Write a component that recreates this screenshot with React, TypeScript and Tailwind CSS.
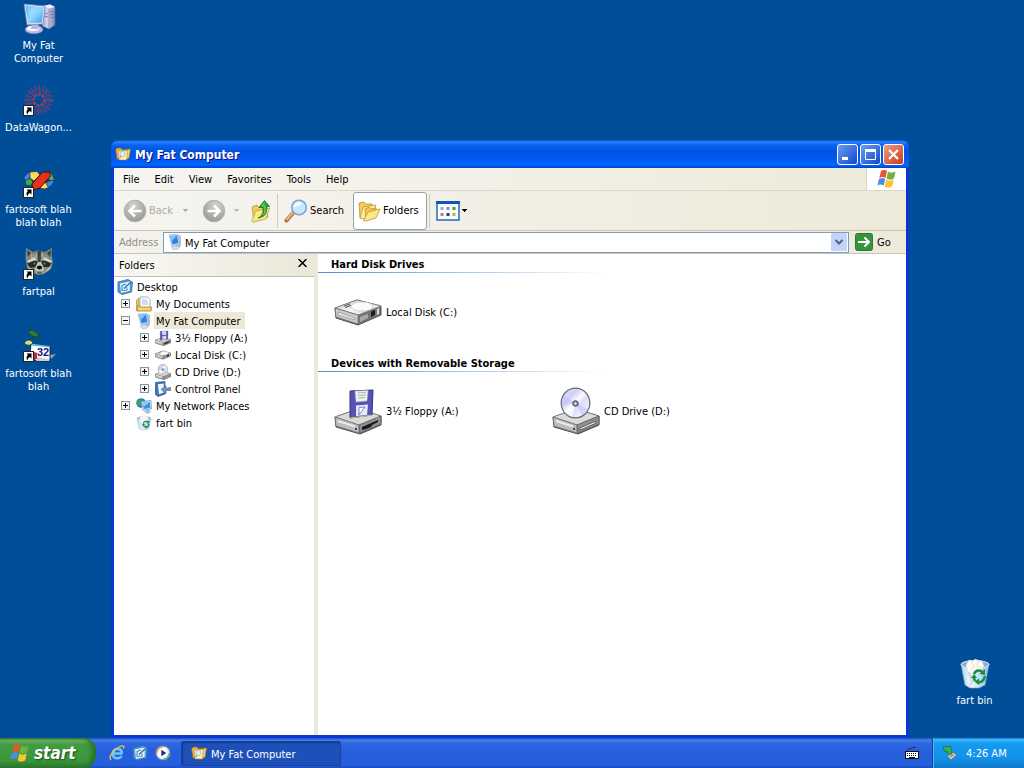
import type { ReactNode } from "react";

type IconProps = { className?: string };

function ShortcutArrow() {
  return (
    <g>
      <rect x=".5" y="20.5" width="10" height="10" fill="#fff" stroke="#222" />
      <path d="M3.500 22.500H8.500V27.500L7 26C5.500 26.500 4.800 27.500 4.500 29.500C3 27.500 3.200 25.500 5 24Z" fill="#000" />
    </g>
  );
}

function ComputerIcon({ className }: IconProps) {
  return (
    <svg viewBox="0 0 32 32" className={className} aria-hidden="true">
      <defs>
        <linearGradient id="pc-screen" x1="0" y1="0" x2="1" y2="1">
          <stop offset="0" stopColor="#3fa8f0" />
          <stop offset=".5" stopColor="#8fdafc" />
          <stop offset="1" stopColor="#3f95ea" />
        </linearGradient>
        <linearGradient id="pc-tower" x1="0" y1="0" x2="1" y2="0">
          <stop offset="0" stopColor="#9ea2cf" />
          <stop offset=".4" stopColor="#d4d2ec" />
          <stop offset="1" stopColor="#8387bb" />
        </linearGradient>
      </defs>
      <path d="M20 3L27 1.500L32 4V22L26 26L19 23Z" fill="url(#pc-tower)" stroke="#5d639b" strokeWidth=".6" />
      <path d="M20 3L27 1.500L32 4L26 5.500Z" fill="#f2f1fb" />
      <path d="M26 5.500V26" stroke="#777bb0" strokeWidth=".6" />
      <path d="M27 9L31.500 8M27 12L31.500 11M27 15L31.500 14M21 10L25 11M21 13L25 14" stroke="#6469a5" strokeWidth=".8" />
      <circle cx="29" cy="18.500" r="1" fill="#5fd05f" />
      <ellipse cx="11" cy="26.500" rx="9" ry="4.300" fill="#b9bce2" stroke="#7479ae" strokeWidth=".6" />
      <ellipse cx="10" cy="25.500" rx="6.500" ry="2.800" fill="#f4f4fd" />
      <path d="M9 20H15L16 26H8Z" fill="#b6b9dd" />
      <path d="M1 1L22 3L20 21L4 22Z" fill="#dfe1f3" stroke="#6c7fb5" strokeWidth=".7" />
      <path d="M2.500 2.500L20.500 4.200L18.800 19.500L5.200 20.300Z" fill="url(#pc-screen)" />
      <path d="M3 2.500L15 4L7 14Z" fill="#fff" opacity=".25" />
    </svg>
  );
}

function WagonIcon({ className }: IconProps) {
  return (
    <svg viewBox="0 0 32 32" className={className} aria-hidden="true">
      <g fill="none">
        <circle cx="16" cy="15" r="13" stroke="#4a4684" strokeWidth="3" strokeDasharray="2 2" />
        <circle cx="16" cy="15" r="10.500" stroke="#7a3f6c" strokeWidth="2" strokeDasharray="2 1.500" />
        <circle cx="16" cy="15" r="8" stroke="#5b4580" strokeWidth="2" strokeDasharray="1.500 1.500" />
        <circle cx="16" cy="15" r="5.500" stroke="#983c59" strokeWidth="2.500" strokeDasharray="3 1" />
        <path d="M16 1V9M16 21V29M2 15H10M22 15H30M6 5L12 11M20 19L26 25M6 25L12 19M20 11L26 5" stroke="#8b3d60" strokeDasharray="1.500 1" />
      </g>
      <ShortcutArrow />
    </svg>
  );
}

function PrismIcon({ className }: IconProps) {
  return (
    <svg viewBox="0 0 32 32" className={className} aria-hidden="true">
      <g stroke="#1b2a30" strokeWidth=".6" strokeLinejoin="round">
        <path d="M1 10L6 5L8 6L7 11L2 14Z" fill="#3d86e8" />
        <path d="M2 14L7 11L10 15L8 19L3 18Z" fill="#3da855" />
        <path d="M7 5L14 4.500L17 8L11 14L7 11Z" fill="#ffd95c" />
        <path d="M26.500 5L29.500 8L31.500 13L27.500 13.500L24 10Z" fill="#4fb85c" />
        <path d="M27.500 13.500H31.500L29 18L25.500 20.500L22 16Z" fill="#3d86e8" />
        <path d="M22 15L25.500 20.500L21.500 22L16 21Z" fill="#ffd95c" />
      </g>
      <path d="M9 17L19.500 5L26.500 5L27.500 9L17 21L10 23Z" fill="#ea3018" stroke="#201410" strokeWidth=".9" strokeLinejoin="round" />
      <ShortcutArrow />
    </svg>
  );
}

function RaccoonIcon({ className }: IconProps) {
  return (
    <svg viewBox="0 0 32 32" className={className} aria-hidden="true">
      <path d="M3 -1L10 3L15 1.500L22 3L29 -1L28.500 6L30 13L28 20L21 25L15 26L8 23L4 18L2.500 10Z" fill="#83897f" />
      <path d="M4 1L8 4L5 8ZM28 1L24 4L27 8Z" fill="#38403c" />
      <path d="M8 5L14 4L14 9L8 10ZM18 4L23 5L25 10L19 9Z" fill="#a9ad9f" />
      <path d="M14.500 2H18L17.500 13H15Z" fill="#3b403d" />
      <path d="M10 2V8M12 3V8M21 3V8M23 4V9" stroke="#666d65" strokeWidth=".8" />
      <path d="M4 14L10 10.500L15 13L13 18L7 19ZM29 13L22 10.500L18 13L20 18L26 18Z" fill="#262b28" />
      <path d="M4 12L11 8.500L14 10.500L5 14ZM29 12L22 8.500L19 10.500L28 14Z" fill="#d6d7c6" />
      <path d="M4 18L8 19L11 24L7 22ZM29 17L25 19L21 24L26 21Z" fill="#b9bcae" />
      <path d="M15 13L18 13L21 19L20 24H13L12 19Z" fill="#c3c5b5" />
      <ellipse cx="16.500" cy="18.500" rx="2.600" ry="2.100" fill="#0c0e0d" />
      <circle cx="11.500" cy="14.500" r=".9" fill="#8a8b69" />
      <circle cx="21.500" cy="14.500" r=".9" fill="#8a8b69" />
      <path d="M13 22.500L20 22.500L18 24.500H15Z" fill="#55605a" />
      <ShortcutArrow />
    </svg>
  );
}

function CardIcon({ className }: IconProps) {
  return (
    <svg viewBox="0 0 32 32" className={className} aria-hidden="true">
      <path d="M26 24L33 23L28 28Z" fill="#8da0ab" />
      <path d="M5 0C8-2 14-1 16 6C12 7 7 5 5 0Z" fill="#2c7a34" stroke="#0c3f18" strokeWidth=".8" />
      <path d="M13 5L15 12" stroke="#224d24" />
      <path d="M8 13L27 15V30H13L7 24Z" fill="#fff" stroke="#101850" strokeWidth=".9" />
      <path d="M8 12.500L27 15V16.500L9 14.500Z" fill="#55b8d6" />
      <path d="M1 12C4 8 8 8 10 12C7 15 4 15 1 12Z" fill="#dcd88c" stroke="#1d421f" strokeWidth=".9" />
      <path d="M11 21L14 22V28L11 29Z" fill="#c22a3d" />
      <path d="M14 26L26 28V30H14Z" fill="#c9d0c5" />
      <text x="14" y="25" fontSize="11" fontWeight="700" fontFamily="Liberation Sans, sans-serif" fill="#1a1680">32</text>
      <ShortcutArrow />
    </svg>
  );
}

function BinIcon({ className }: IconProps) {
  return (
    <svg viewBox="0 0 32 32" className={className} aria-hidden="true">
      <defs>
        <linearGradient id="bin-body" x1="0" y1="0" x2="1" y2="0">
          <stop offset="0" stopColor="#a9d3f0" />
          <stop offset=".35" stopColor="#f3f9fe" />
          <stop offset="1" stopColor="#8dc0ea" />
        </linearGradient>
      </defs>
      <path d="M2 6L30 6L26 27L20 30H11L6 27Z" fill="url(#bin-body)" stroke="#7fa8cc" strokeWidth=".7" />
      <ellipse cx="16" cy="6.500" rx="14" ry="4" fill="#86afe0" stroke="#d8ebfa" />
      <path d="M7 7L10 2L14 3L16 1L20 2.500L23 3L25 8L21 14L16 12L11 18L8 12Z" fill="#fbfaf4" stroke="#c4c7cc" strokeWidth=".5" />
      <path d="M12 4L15 8L13 12M19 3L18 8L23 10" stroke="#e4d9bd" strokeWidth=".8" fill="none" />
      <path d="M10 14L13 24L11 28" stroke="#d0c3dc" strokeWidth="2" fill="none" opacity=".7" />
      <g fill="none" stroke="#16903a" strokeWidth="2.500">
        <path d="M15 16C17 11.500 22 11.500 24 15" />
        <path d="M26 18C25 23 22 25 18 24" />
        <path d="M16 23L14.500 19" />
      </g>
      <path d="M26 11V17L20.500 16ZM20 20.500V27L15.500 23.500ZM12 20L15 16L18 20Z" fill="#16903a" />
    </svg>
  );
}

function MonitorIcon({ className }: IconProps) {
  return (
    <svg viewBox="0 0 16 16" className={className} aria-hidden="true">
      <path d="M10 1L13.500 2V12L11 13L9 12Z" fill="#b4c3d6" stroke="#8ba0ba" strokeWidth=".5" />
      <path d="M4 13.500L8 11.500L13 13L10 15.500H6Z" fill="#d5deea" stroke="#9aacc2" strokeWidth=".5" />
      <path d="M2 1L10.500 0.500L12.500 9.500L5 12Z" fill="#cfe4f6" stroke="#7ea5d0" strokeWidth=".6" />
      <path d="M3.300 2L9.800 1.500L11.400 8.800L5.600 10.600Z" fill="#2b82df" />
      <path d="M3.300 2L9.800 1.500L5 7Z" fill="#81c7f8" />
    </svg>
  );
}

function FolderFront({ className }: IconProps) {
  return (
    <svg viewBox="0 0 16 16" className={className} aria-hidden="true">
      <path d="M.5 4L2 2H6L7 3.500H13V13H2Z" fill="#e9b450" stroke="#8b611d" strokeWidth=".7" />
      <path d="M10 4L15.500 3L14 12L10 14Z" fill="#fbcf6a" stroke="#a97b28" strokeWidth=".6" />
      <path d="M3 5L12.500 4.500L11.500 14H4Z" fill="#fff3ba" stroke="#b78432" strokeWidth=".6" />
      <path d="M4.500 12.500L6 10" stroke="#b98a52" strokeWidth="1.200" />
      <circle cx="7.500" cy="8" r="2.700" fill="#d6f0fa" stroke="#8fb3c3" strokeWidth=".7" />
    </svg>
  );
}

function FlagIcon({ className }: IconProps) {
  return (
    <svg viewBox="0 0 20 20" className={className} aria-hidden="true">
      <path d="M4 2C6 .500 8 .500 10 2L8.500 9C6.500 7.500 4.500 7.500 2.300 9Z" fill="#e8562a" />
      <path d="M11 2.500C13 4 15.500 4 18.500 2.500L17 9.500C14.500 11 12 11 9.500 9.500Z" fill="#6db33f" />
      <path d="M2 10C4.500 8.700 6.500 8.700 8.200 10L6.700 16.500C4.500 15 2.500 15 .4 16.500Z" fill="#4c8ce4" />
      <path d="M9.200 10.500C11.500 12 14 12 16.700 10.500L15.200 17.500C12.500 19 10 19 7.700 17.500Z" fill="#f8c630" />
    </svg>
  );
}

function RoundArrow({ flip }: { flip?: boolean }) {
  return (
    <svg viewBox="0 0 24 24" className={flip ? "size-6 -scale-x-100" : "size-6"} aria-hidden="true">
      <defs>
        <radialGradient id="round-arrow" cx=".4" cy=".25" r=".8">
          <stop offset="0" stopColor="#d2d2d0" />
          <stop offset=".6" stopColor="#aeaeac" />
          <stop offset="1" stopColor="#969694" />
        </radialGradient>
      </defs>
      <circle cx="12" cy="12" r="10.800" fill="url(#round-arrow)" stroke="#b2b2ad" />
      <path d="M18.500 12H7M12 6.500L6.500 12L12 17.500" fill="none" stroke="#fff" strokeWidth="2.600" />
    </svg>
  );
}

function UpFolderIcon() {
  return (
    <svg viewBox="0 0 24 24" className="size-6" aria-hidden="true">
      <path d="M3 8L8 6L10 8L17 6L19 18L5 23Z" fill="#efcd58" stroke="#a89040" strokeWidth=".7" />
      <path d="M2.500 22L7 12L20.500 9L17 20L4 23Z" fill="#fbe984" stroke="#b49a40" strokeWidth=".7" />
      <path d="M9 19C13.500 17 14.500 13 14 8.500H10L15.500 1.500L20.500 7.500H17.500C18.500 14 16 18 9 19Z" fill="#2fa836" stroke="#176b22" strokeWidth=".8" />
      <path d="M15.500 3.500L13 7H16C16.500 11 16 14 14 16" fill="none" stroke="#7fd765" />
    </svg>
  );
}

function SearchIcon() {
  return (
    <svg viewBox="0 0 24 24" className="size-6" aria-hidden="true">
      <path d="M9 14L2.500 21.500" stroke="#a5673c" strokeWidth="4" strokeLinecap="round" />
      <path d="M9 13.500L3 20.500" stroke="#eeb07a" strokeWidth="2.200" strokeLinecap="round" />
      <circle cx="15" cy="8.500" r="7.300" fill="#c8e9fb" stroke="#7ea4d3" strokeWidth="1.600" />
      <path d="M10 8C10 4 15 2 18 4C16 6 13 8 10 8Z" fill="#fff" opacity=".9" />
    </svg>
  );
}

function FoldersIcon() {
  return (
    <svg viewBox="0 0 24 24" className="size-6" aria-hidden="true">
      <g stroke="#b8933a" strokeWidth=".8" strokeLinejoin="round">
        <path d="M2 4L7 3L9 5L15 5V15L5 19H3Z" fill="#f6cc55" />
        <path d="M3 19L6 8L19 6L15 17L5 20Z" fill="#ffec97" />
        <path d="M8 10L12 8L14 10L19 9V17L9 21Z" fill="#f5c84a" />
        <path d="M6.500 22L11 13L23 10L19 19L9 22Z" fill="#ffe985" />
      </g>
    </svg>
  );
}

function ViewsIcon() {
  return (
    <svg viewBox="0 0 24 20" className="h-5 w-6" aria-hidden="true">
      <rect x="1" y="1" width="22" height="18" fill="#f7fbff" stroke="#2469c5" strokeWidth="1.500" />
      <rect x="0" y="0" width="24" height="3" fill="#1653b8" />
      <rect x="4.500" y="6" width="3" height="3" fill="#98a9d8" />
      <rect x="10.500" y="6" width="3" height="3" fill="#7d92cb" />
      <rect x="16.500" y="6" width="3" height="3" fill="#31a238" />
      <rect x="4.500" y="12" width="3" height="3" fill="#e9704d" />
      <rect x="10.500" y="12" width="3" height="3" fill="#153d9b" />
      <rect x="16.500" y="12" width="3" height="3" fill="#e2a23b" />
    </svg>
  );
}

function Caret({ className }: IconProps) {
  return (
    <svg viewBox="0 0 5 3" className={className} aria-hidden="true" shapeRendering="crispEdges">
      <path d="M0 0H5L2.500 3Z" fill="currentColor" />
    </svg>
  );
}

function DesktopIcon({ className }: IconProps) {
  return (
    <svg viewBox="0 0 16 16" className={className} aria-hidden="true">
      <path d="M1 3L11 0.500L15.500 3L14.500 13L5 15.500L1 13Z" fill="#4f9ad6" stroke="#2d6aa5" strokeWidth=".8" />
      <path d="M3 4.500L13 2.500L12.500 12L4 13.800Z" fill="#eef9fe" />
      <path d="M9 5L5 6.500V11.500L10 11V8.500" fill="none" stroke="#3d86bd" strokeWidth="1.100" />
      <path d="M7 9.500L13.500 3.500" stroke="#2c6d9f" strokeWidth="1.400" />
    </svg>
  );
}

function DocumentsIcon({ className }: IconProps) {
  return (
    <svg viewBox="0 0 16 16" className={className} aria-hidden="true">
      <path d="M.5 4L3 2V14.500H.5Z" fill="#f2c765" stroke="#b58a3a" strokeWidth=".7" />
      <path d="M4 1H11.500L14 3.500V12H4Z" fill="#fff" stroke="#8a99b1" strokeWidth=".8" />
      <path d="M6 4H11M6 6H12M6 8H12" stroke="#86a9d0" strokeWidth=".8" />
      <path d="M1 15L2 9L4 11H15.500L15 15Z" fill="#f6d470" stroke="#a57a26" strokeWidth=".8" />
    </svg>
  );
}

function DiskIcon({ className }: IconProps) {
  return (
    <svg viewBox="0 0 48 48" className={className} aria-hidden="true">
      <defs>
        <linearGradient id="disk-top" x1="0" y1="0" x2="1" y2="1">
          <stop offset="0" stopColor="#b5b5b5" />
          <stop offset=".5" stopColor="#f8f8f8" />
          <stop offset="1" stopColor="#cfcfcf" />
        </linearGradient>
      </defs>
      <path d="M1 20L23 12L47 18V27L24 37L2 30Z" fill="#777" stroke="#4e4e4e" />
      <path d="M1 20L23 12L47 18L24 27Z" fill="url(#disk-top)" stroke="#858585" strokeWidth=".8" />
      <path d="M1 20L24 27V36L2 29Z" fill="#cacaca" stroke="#666" strokeWidth=".7" />
      <path d="M24 27L46 19V26L24 36Z" fill="#747474" />
      <path d="M4 24L21 30V32L4 27Z" fill="#e9e9e9" stroke="#7d7d7d" strokeWidth=".6" />
      <ellipse cx="28" cy="18.500" rx="11" ry="4.500" fill="#fbfbfb" stroke="#c6c6c6" strokeWidth=".7" />
      <path d="M10 18L16 16M11 19.500L17 17.500" stroke="#555" />
      <path d="M26 29L34 26V30L26 34Z" fill="#a8a8a8" />
      <path d="M37 23.500L41 22V27L37 29Z" fill="#1c1c1c" />
      <path d="M43 21L45 20V26L43 27Z" fill="#ddd" />
    </svg>
  );
}

function DriveBox() {
  return (
    <g>
      <path d="M1 30L24 22L47 29V38L26 47L2 40Z" fill="#999" stroke="#4d4d4d" />
      <path d="M1 30L24 22L47 29L25 38Z" fill="#dadada" stroke="#858585" strokeWidth=".8" />
      <path d="M1 30L25 38V46L2 39Z" fill="#bdbdbd" stroke="#666" strokeWidth=".7" />
      <path d="M4 33L21 38.500V40.500L4 35Z" fill="#ededed" />
      <path d="M25 38L47 29V37L26 46Z" fill="#8f8f8f" stroke="#555" strokeWidth=".7" />
      <circle cx="22" cy="42" r="1" fill="#222" />
    </g>
  );
}

function FloppyIcon({ className }: IconProps) {
  return (
    <svg viewBox="0 0 48 48" className={className} aria-hidden="true">
      <DriveBox />
      <path d="M28 40L44 33V35L38 38L37 40L32 42L28 43Z" fill="#191919" />
      <path d="M16 4L39 3L38 28L16 31Z" fill="#5553b4" stroke="#33327a" />
      <path d="M21 4L34 3.500L33 14L22 15Z" fill="#eef2ee" stroke="#a5b3c9" strokeWidth=".5" />
      <path d="M24 6L32 5.500M24 8.500L32 8M24 11L31 10.500" stroke="#90a89d" strokeWidth=".8" />
      <path d="M22 18.500L34 17.500L33 28L22 29Z" fill="#e8e9fb" />
      <path d="M25 20.500L31 20L25 28Z" fill="#fff" stroke="#6462bd" strokeWidth=".8" />
      <path d="M16 31L39 28" stroke="#c8cc75" />
      <path d="M42 32L44 31" stroke="#68ca62" strokeWidth="1.500" />
    </svg>
  );
}

function CdIcon({ className }: IconProps) {
  return (
    <svg viewBox="0 0 48 48" className={className} aria-hidden="true">
      <defs>
        <linearGradient id="cd-face" x1="0" y1="0" x2="1" y2="1">
          <stop offset="0" stopColor="#e9e8fd" />
          <stop offset=".3" stopColor="#cfd0f8" />
          <stop offset=".48" stopColor="#fafaff" />
          <stop offset=".6" stopColor="#dcdefb" />
          <stop offset="1" stopColor="#fff" />
        </linearGradient>
      </defs>
      <DriveBox />
      <path d="M28 41L44 34V36L28 43Z" fill="#fff" stroke="#333" strokeWidth=".7" />
      <ellipse cx="23.500" cy="16" rx="14.300" ry="14.800" fill="url(#cd-face)" stroke="#666779" strokeWidth="1.200" />
      <path d="M23.500 16L12 9A14 14 0 0 0 10 19ZM23.500 16L36.500 22A14 14 0 0 1 30 28.500Z" fill="#bfc0f3" opacity=".55" />
      <path d="M23.500 16L20 30A14 14 0 0 1 12 24Z" fill="#fff" opacity=".7" />
      <circle cx="23.500" cy="16.500" r="2.800" fill="#85869d" stroke="#4b4c62" />
      <circle cx="23.500" cy="16.500" r="1.100" fill="#fff" />
    </svg>
  );
}

function ControlPanelIcon({ className }: IconProps) {
  return (
    <svg viewBox="0 0 16 16" className={className} aria-hidden="true">
      <path d="M.5 1.500L10 .5V13L3 15.500L.5 13.500Z" fill="#3f73b4" stroke="#24508c" strokeWidth=".7" />
      <path d="M2.800 3.200L8.800 2.500V11.500L4 13.200Z" fill="#eaf5fc" />
      <path d="M6 8.500L11 5V7.500L15.500 6.500V9.500L11 9.500V12.500Z" fill="#7898be" stroke="#4a658c" strokeWidth=".7" />
    </svg>
  );
}

function NetworkIcon({ className }: IconProps) {
  return (
    <svg viewBox="0 0 16 16" className={className} aria-hidden="true">
      <circle cx="5" cy="5" r="4.800" fill="#2e76d2" />
      <path d="M2 2C4 0 7 1 7 3L4 5L5 8L2 8C0 6 1 4 2 2Z" fill="#39a64a" />
      <path d="M8 14L12 11L15 14L12 16Z" fill="#aebfce" />
      <path d="M5 3.500L15 2.500L15.500 11L7 12.500Z" fill="#cbe2f4" stroke="#6c96c0" strokeWidth=".7" />
      <path d="M6.500 4.800L13.800 4L14.200 10L8 11Z" fill="#3d91e2" />
      <path d="M6.500 4.800L13.800 4L8 8.500Z" fill="#8dd0fa" />
    </svg>
  );
}

function InternetIcon() {
  return (
    <svg viewBox="0 0 16 16" className="size-4" aria-hidden="true">
      <path d="M12.500 11C11 14 5 14.500 4 10C3 5.500 7 3 10 4C12.500 5 13 7 12.500 8.500H5" fill="none" stroke="#6bc5f7" strokeWidth="2.600" />
      <path d="M2 15C-1 12 5 4 11 1.500C14 .2 15.500 1 14.500 3.500" fill="none" stroke="#f2c64a" strokeWidth="1.300" />
    </svg>
  );
}

function PlayerIcon() {
  return (
    <svg viewBox="0 0 16 16" className="size-4" aria-hidden="true">
      <circle cx="8" cy="8" r="7" fill="#e7edf8" stroke="#6d86bd" />
      <path d="M1.800 8A6.200 6.200 0 0 1 8 1.800" stroke="#e89a58" strokeWidth="1.600" fill="none" />
      <path d="M8 14.200A6.200 6.200 0 0 0 14.200 8" stroke="#7ab07a" strokeWidth="1.600" fill="none" />
      <circle cx="8" cy="8" r="4.800" fill="#fff" />
      <path d="M6.300 4.800L11.300 8L6.300 11.200Z" fill="#172f7c" />
    </svg>
  );
}

function KeyboardIcon() {
  return (
    <svg viewBox="0 0 14 14" className="size-3.5" aria-hidden="true">
      <path d="M3 4C4 1 6 4 7 2S9 3 11 1" fill="none" stroke="#101010" strokeDasharray="2 1" />
      <rect x=".5" y="5.500" width="13" height="7" fill="#fff" stroke="#101010" />
      <path d="M2 7.500H12M2 9.500H12" stroke="#101010" strokeDasharray="1 1" />
      <path d="M4 11.500H10" stroke="#101010" />
    </svg>
  );
}

function EjectIcon() {
  return (
    <svg viewBox="0 0 16 16" className="size-4" aria-hidden="true">
      <path d="M5 11L11 7L15 10L9 15Z" fill="#c6cdd2" stroke="#59666f" strokeWidth=".8" />
      <path d="M8 12L12 9.500" stroke="#cc5350" />
      <path d="M1 2L9 1.500V4L10 9L7 10L5 6L3 7Z" fill="#37b34a" stroke="#17652b" strokeWidth=".6" />
    </svg>
  );
}

const shortcuts: { label: string; Icon: (p: IconProps) => ReactNode }[] = [
  { label: "My Fat Computer", Icon: ComputerIcon },
  { label: "DataWagon...", Icon: WagonIcon },
  { label: "fartosoft blah blah blah", Icon: PrismIcon },
  { label: "fartpal", Icon: RaccoonIcon },
  { label: "fartosoft blah blah", Icon: CardIcon },
];

function DesktopShortcut({ label, Icon }: { label: string; Icon: (p: IconProps) => ReactNode }) {
  return (
    <button type="button" className="flex w-[77px] flex-col items-center gap-1 text-center leading-[13px] text-white">
      <Icon className="size-8 shrink-0 overflow-visible" />
      <span>{label}</span>
    </button>
  );
}

function TreeRow({
  label,
  icon,
  level,
  state,
  selected,
}: {
  label: string;
  icon: ReactNode;
  level: 0 | 1 | 2;
  state?: "+" | "-";
  selected?: boolean;
}) {
  const indent = level === 0 ? "pl-[3px]" : level === 1 ? "pl-[7px]" : "pl-[26px]";
  return (
    <li className={`flex h-[17px] items-center ${indent}`}>
      {level > 0 && (
        <span className="mr-1.5 flex w-[9px] shrink-0">
          {state && (
            <button type="button" aria-label={`${state === "+" ? "Expand" : "Collapse"} ${label}`}>
              <svg viewBox="0 0 9 9" className="size-[9px]" shapeRendering="crispEdges" aria-hidden="true">
                <rect x=".5" y=".5" width="8" height="8" fill="#f5f4ef" stroke="#8494a6" />
                <path d={state === "+" ? "M2 4.500H7M4.500 2V7" : "M2 4.500H7"} stroke="#000" />
              </svg>
            </button>
          )}
        </span>
      )}
      {icon}
      <button
        type="button"
        className={`ml-0.5 h-[17px] pr-1 pl-0.5 leading-[19px] whitespace-nowrap ${selected ? "bg-[#ece9d8]" : ""}`}
      >
        {label}
      </button>
    </li>
  );
}

function DriveGroup({ title, children }: { title: string; children: ReactNode }) {
  return (
    <section>
      <h2 className="h-[18px] pl-[13px] leading-[21px] font-bold">{title}</h2>
      <div className="h-px w-[290px] bg-linear-to-r from-[#4a90cf] to-white" />
      <div className="flex flex-wrap px-4 pt-[15px] pb-[17px]">{children}</div>
    </section>
  );
}

function DriveItem({ label, icon }: { label: string; icon: ReactNode }) {
  return (
    <button type="button" className="flex w-[218px] items-center gap-1 text-left">
      {icon}
      {label}
    </button>
  );
}

function CaptionButton({ label, className, children }: { label: string; className: string; children: ReactNode }) {
  return (
    <button
      type="button"
      aria-label={label}
      className={`flex size-[21px] items-center justify-center rounded-[3px] border border-white ${className}`}
    >
      <svg viewBox="0 0 19 19" className="size-[19px]" aria-hidden="true">
        {children}
      </svg>
    </button>
  );
}

function ExplorerWindow() {
  return (
    <section className="absolute top-[140px] right-[115px] bottom-[30px] left-[111px] flex flex-col rounded-t-lg bg-[#0a36d4] px-[3px] pb-[3px]">
      <header className="-mx-[3px] flex h-7 shrink-0 items-center rounded-t-lg bg-[linear-gradient(#0a56d5_0%,#2f80fa_8%,#0763f0_18%,#0054e3_40%,#0058ec_65%,#0066ff_88%,#0045c8_100%)] pr-[5px] pl-1">
        <FolderFront className="size-4" />
        <h1 className="ml-1 flex-1 pt-0.5 text-[12px] leading-4 font-bold text-white [text-shadow:1px_1px_#0f1089]">My Fat Computer</h1>
        <div className="flex gap-0.5 pt-px">
          <CaptionButton label="Minimize" className="bg-linear-to-br from-[#6b9cf3] to-[#1445cf]">
            <path d="M4 13.500H10" stroke="#fff" strokeWidth="3" />
          </CaptionButton>
          <CaptionButton label="Maximize" className="bg-linear-to-br from-[#6b9cf3] to-[#1445cf]">
            <path d="M4.500 5V14.500H14.500V5" fill="none" stroke="#fff" />
            <path d="M4 5.500H15" stroke="#fff" strokeWidth="3" />
          </CaptionButton>
          <CaptionButton label="Close" className="bg-linear-to-br from-[#ee9a80] to-[#c93512]">
            <path d="M5 5L14 14M14 5L5 14" stroke="#fff" strokeWidth="2.200" />
          </CaptionButton>
        </div>
      </header>

      <div className="flex min-h-0 flex-1 flex-col bg-white">
        <nav className="flex h-[23px] shrink-0 border-b border-[#d9d6ca] bg-linear-to-r from-[#f6f5f2] to-[#eeead9]">
          <div className="flex flex-1 items-center gap-[15px] pl-[9px]">
            {["File", "Edit", "View", "Favorites", "Tools", "Help"].map((m) => (
              <button key={m} type="button">
                {m}
              </button>
            ))}
          </div>
          <div className="flex w-10 items-center justify-center border-l border-[#d9d6ca] bg-white">
            <FlagIcon className="size-5" />
          </div>
        </nav>

        <div className="flex h-10 shrink-0 items-center border-b border-[#c9c6b8] bg-linear-to-r from-[#f5f4f0] to-[#eeead9] pl-[9px]">
          <button type="button" disabled className="flex items-center gap-0.5 text-[#aeada2]">
            <RoundArrow />
            <span className="w-8 text-left">Back</span>
            <Caret className="w-[5px]" />
          </button>
          <button type="button" disabled aria-label="Forward" className="ml-3.5 flex items-center gap-2 text-[#bfbdb2]">
            <RoundArrow flip />
            <Caret className="w-[5px]" />
          </button>
          <button type="button" aria-label="Up" className="ml-2.5">
            <UpFolderIcon />
          </button>
          <div className="mx-1 h-[34px] w-px bg-[#cfccbf]" />
          <button type="button" className="flex w-[67px] items-center gap-0.5 pl-0.5">
            <SearchIcon />
            Search
          </button>
          <button
            type="button"
            aria-pressed="true"
            className="ml-1 flex h-[38px] w-[74px] items-center gap-0.5 rounded-[3px] border border-[#98a0a8] bg-white pl-[3px]"
          >
            <FoldersIcon />
            Folders
          </button>
          <div className="mx-0.5 h-[34px] w-px bg-[#cfccbf]" />
          <button type="button" aria-label="Views" className="flex items-center gap-0.5 pl-1">
            <ViewsIcon />
            <Caret className="w-[5px]" />
          </button>
        </div>

        <form
          className="flex h-[23px] shrink-0 items-center border-b border-[#c9c6b8] bg-linear-to-r from-[#f3f2ed] to-[#eeead9] pl-[5px]"
          onSubmit={(e) => e.preventDefault()}
        >
          <label htmlFor="address" className="w-[44px] shrink-0 pt-px text-[#8f8e85]">
            Address
          </label>
          <div className="flex h-[21px] min-w-0 flex-1 items-center border border-[#7f9db9] bg-white pr-px pl-[3px]">
            <MonitorIcon className="size-4 shrink-0" />
            <select id="address" className="min-w-0 flex-1 appearance-none bg-transparent pt-0.5 pl-0.5 outline-none">
              <option>My Fat Computer</option>
            </select>
            <svg viewBox="0 0 16 18" className="h-[18px] w-4 shrink-0" aria-hidden="true">
              <rect width="16" height="18" rx="1.500" fill="#c3d3fb" />
              <path d="M4.500 7L8 10.500L11.500 7" fill="none" stroke="#4d6185" strokeWidth="2" />
            </svg>
          </div>
          <button type="submit" className="flex w-[57px] items-center gap-1 pl-1.5">
            <svg viewBox="0 0 18 18" className="size-[18px]" aria-hidden="true">
              <rect x=".5" y=".5" width="17" height="17" rx="2" fill="#38933e" stroke="#2c7a35" />
              <path d="M3 9H14M9.500 4.500L14 9L9.500 13.500" fill="none" stroke="#fff" strokeWidth="2" />
            </svg>
            <span className="pt-px">Go</span>
          </button>
        </form>

        <div className="flex min-h-0 flex-1">
          <aside className="w-[200px] shrink-0">
            <div className="flex h-[23px] items-center justify-between border-b border-[#c3c1b4] bg-linear-to-r from-[#f8f7f4] to-[#ebe8d8] pr-[7px] pl-[5px]">
              <h2 className="pt-px">Folders</h2>
              <button type="button" aria-label="Close folders" className="mb-1">
                <svg viewBox="0 0 9 8" className="h-2 w-[9px]" aria-hidden="true">
                  <path d="M.5 0L8.500 8M8.500 0L.5 8" stroke="#000" strokeWidth="1.500" />
                </svg>
              </button>
            </div>
            <ul className="pt-px">
              <TreeRow level={0} label="Desktop" icon={<DesktopIcon className="size-4" />} />
              <TreeRow level={1} state="+" label="My Documents" icon={<DocumentsIcon className="size-4" />} />
              <TreeRow level={1} state="-" label="My Fat Computer" selected icon={<MonitorIcon className="size-4" />} />
              <TreeRow level={2} state="+" label="3½ Floppy (A:)" icon={<FloppyIcon className="size-4" />} />
              <TreeRow level={2} state="+" label="Local Disk (C:)" icon={<DiskIcon className="size-4" />} />
              <TreeRow level={2} state="+" label="CD Drive (D:)" icon={<CdIcon className="size-4" />} />
              <TreeRow level={2} state="+" label="Control Panel" icon={<ControlPanelIcon className="size-4" />} />
              <TreeRow level={1} state="+" label="My Network Places" icon={<NetworkIcon className="size-4" />} />
              <TreeRow level={1} label="fart bin" icon={<BinIcon className="size-4" />} />
            </ul>
          </aside>
          <div className="w-1 shrink-0 bg-[#ece9d8]" />
          <main className="min-w-0 flex-1">
            <DriveGroup title="Hard Disk Drives">
              <DriveItem label="Local Disk (C:)" icon={<DiskIcon className="size-12" />} />
            </DriveGroup>
            <DriveGroup title="Devices with Removable Storage">
              <DriveItem label="3½ Floppy (A:)" icon={<FloppyIcon className="size-12" />} />
              <DriveItem label="CD Drive (D:)" icon={<CdIcon className="size-12" />} />
            </DriveGroup>
          </main>
        </div>
      </div>
    </section>
  );
}

function Taskbar() {
  return (
    <footer className="flex h-[30px] shrink-0 items-center bg-[linear-gradient(#2450b8_0%,#3f7ff0_8%,#2f66e0_18%,#245edb_50%,#2560df_88%,#1d4cc0_100%)] text-white">
      <button
        type="button"
        className="flex h-full w-24 items-center gap-1 rounded-r-xl bg-[linear-gradient(#388038_0%,#6db46b_8%,#429c42_22%,#3a963a_75%,#2c782f_100%)] pl-2.5 shadow-[inset_-4px_0_5px_#256f2b]"
      >
        <FlagIcon className="size-5" />
        <span className="text-[17px] leading-5 font-bold italic [text-shadow:1px_1px_2px_#174a17]">start</span>
      </button>
      <div className="flex w-[85px] gap-[7px] pl-[13px]">
        <button type="button" aria-label="Internet">
          <InternetIcon />
        </button>
        <button type="button" aria-label="Show desktop">
          <DesktopIcon className="size-4" />
        </button>
        <button type="button" aria-label="Media player">
          <PlayerIcon />
        </button>
      </div>
      <button
        type="button"
        className="flex h-[25px] w-40 items-center gap-1 rounded-[2px] border border-[#1741a0] bg-[#1e51b8] pl-[9px] shadow-[inset_1px_1px_2px_#143a8c]"
      >
        <FolderFront className="size-4" />
        <span className="pt-0.5">My Fat Computer</span>
      </button>
      <div className="ml-auto flex w-[27px]">
        <KeyboardIcon />
      </div>
      <div className="flex h-full w-[92px] items-center gap-2 border-l border-[#0c3f9e] bg-[linear-gradient(#0d7bd5_0%,#3fc0fb_6%,#159bef_16%,#1290e8_70%,#0f76c8_100%)] pl-[9px] shadow-[inset_1px_0_#3fc0fb]">
        <EjectIcon />
        <time>4:26 AM</time>
      </div>
    </footer>
  );
}

export default function App() {
  return (
    <div className="relative flex min-h-screen flex-col overflow-hidden bg-[#004e98] font-['DejaVu_Sans_Condensed',Roboto,sans-serif] text-[11px] leading-[13px] text-black">
      <div className="relative flex-1 pt-[3px]">
        <div className="grid w-[77px] auto-rows-[82px] items-start">
          {shortcuts.map((s) => (
            <DesktopShortcut key={s.label} {...s} />
          ))}
        </div>
        <div className="absolute right-[11px] bottom-[31px]">
          <DesktopShortcut label="fart bin" Icon={BinIcon} />
        </div>
      </div>
      <ExplorerWindow />
      <Taskbar />
    </div>
  );
}
